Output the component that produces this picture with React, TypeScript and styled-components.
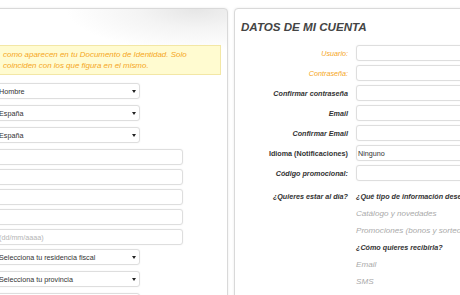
import React from 'react';
import styled, { createGlobalStyle } from 'styled-components';

const GlobalStyle = createGlobalStyle`
  html, body {
    margin: 0;
    padding: 0;
    background: #fff;
    overflow: hidden;
    font-family: "Liberation Sans", Arial, sans-serif;
  }
`;

const Page = styled.div`
  display: flex;
  align-items: flex-start;
  gap: 6px;
  padding-top: 8px;
  margin-left: -30px;
  width: 700px;
`;

const LeftPanel = styled.section`
  flex: none;
  box-sizing: border-box;
  width: 258px;
  min-height: 320px;
  padding: 36px 6px 0 10px;
  border: 1px solid #d9d9d9;
  border-radius: 0 4px 0 0;
  box-shadow: 0 0 3px rgba(0, 0, 0, 0.08);
  background:
    radial-gradient(ellipse 130px 42px at 88% 0, #e6e6e6 0%, #f4f4f4 45%, rgba(255, 255, 255, 0) 100%),
    #fff;
`;

const Notice = styled.div`
  box-sizing: border-box;
  height: 30px;
  padding: 3px 4px 0 21px;
  border: 1px solid #f3e7a5;
  background: #fffbd0;
  color: #f5a623;
  font-size: 7.95px;
  font-style: italic;
  line-height: 11px;
`;

const FieldColumn = styled.div`
  display: flex;
  flex-direction: column;
  align-items: flex-start;
  margin: 8px 0 0 9px;
`;

const Box = styled.div<{ $width: number }>`
  box-sizing: border-box;
  display: flex;
  align-items: center;
  justify-content: space-between;
  width: ${({ $width }) => $width}px;
  height: 16px;
  border: 1px solid #dedede;
  border-radius: 3px;
  box-shadow: 0 0 2px rgba(0, 0, 0, 0.06);
  background: #fff;
  color: #333;
  font-size: 7.2px;
  white-space: nowrap;
  overflow: hidden;
`;

const SelectBox = styled(Box)`
  padding: 0 3px 0 8px;
  margin-bottom: 6px;
`;

const InputBox = styled(Box)<{ $muted?: boolean }>`
  padding: 0 0 0 8px;
  margin-bottom: 4px;
  color: ${({ $muted }) => ($muted ? '#b5b5b5' : '#333')};
`;

const Caret = styled.span`
  width: 0;
  height: 0;
  border-left: 2.5px solid transparent;
  border-right: 2.5px solid transparent;
  border-top: 3px solid #222;
`;

const RightPanel = styled.section`
  flex: none;
  box-sizing: border-box;
  width: 320px;
  min-height: 320px;
  padding: 11px 0 0 6px;
  border: 1px solid #d9d9d9;
  border-radius: 4px 4px 0 0;
  box-shadow: 0 0 3px rgba(0, 0, 0, 0.08);
  background: #fff;
`;

const Title = styled.h2`
  margin: 0 0 11px;
  color: #444;
  font-size: 11.6px;
  font-weight: 900;
  font-style: italic;
  line-height: 14px;
`;

const FormGrid = styled.div`
  display: grid;
  grid-template-columns: 107px 160px;
  grid-auto-rows: 16px;
  column-gap: 8px;
  row-gap: 4px;
`;

const Label = styled.label<{ $tone?: 'required' | 'strong' | 'plain' }>`
  align-self: center;
  text-align: right;
  font-size: 7.2px;
  white-space: nowrap;
  color: ${({ $tone }) => ($tone === 'required' ? '#f5a623' : '#333')};
  font-weight: ${({ $tone }) => ($tone === 'required' ? 400 : 700)};
  font-style: ${({ $tone }) => ($tone === 'plain' ? 'normal' : 'italic')};
`;

const FieldBox = styled(Box)`
  padding: 0 0 0 1px;
`;

const Prefs = styled.div`
  display: grid;
  grid-template-columns: 107px 160px;
  grid-auto-rows: 17px;
  column-gap: 8px;
  margin-top: 7px;
`;

const PrefLine = styled.div<{ $heading?: boolean }>`
  grid-column: 2;
  align-self: center;
  white-space: nowrap;
  font-style: italic;
  font-size: ${({ $heading }) => ($heading ? '7.2px' : '8.1px')};
  font-weight: ${({ $heading }) => ($heading ? 700 : 400)};
  color: ${({ $heading }) => ($heading ? '#333' : '#aaa')};
`;

const PrefLabel = styled(Label)`
  grid-column: 1;
  grid-row: 1;
`;

const accountRows: { label: string; tone: 'required' | 'strong' | 'plain'; value?: string }[] = [
  { label: 'Usuario:', tone: 'required' },
  { label: 'Contraseña:', tone: 'required' },
  { label: 'Confirmar contraseña', tone: 'strong' },
  { label: 'Email', tone: 'strong' },
  { label: 'Confirmar Email', tone: 'strong' },
  { label: 'Idioma (Notificaciones)', tone: 'plain', value: 'Ninguno' },
  { label: 'Código promocional:', tone: 'strong' },
];

const App: React.FC = () => {
  return (
    <>
      <GlobalStyle />
      <Page>
        <LeftPanel>
          <Notice>
            como aparecen en tu Documento de Identidad. Solo
            <br />
            coinciden con los que figura en el mismo.
          </Notice>
          <FieldColumn>
            <SelectBox $width={150}>Hombre<Caret /></SelectBox>
            <SelectBox $width={150}>España<Caret /></SelectBox>
            <SelectBox $width={150}>España<Caret /></SelectBox>
            <InputBox $width={193} />
            <InputBox $width={193} />
            <InputBox $width={193} />
            <InputBox $width={193} />
            <InputBox $width={193} $muted>(dd/mm/aaaa)</InputBox>
            <SelectBox $width={150}>Selecciona tu residencia fiscal<Caret /></SelectBox>
            <SelectBox $width={150}>Selecciona tu provincia<Caret /></SelectBox>
            <SelectBox $width={150}><span /><Caret /></SelectBox>
          </FieldColumn>
        </LeftPanel>

        <RightPanel>
          <Title>DATOS DE MI CUENTA</Title>
          <FormGrid>
            {accountRows.map((row) => (
              <React.Fragment key={row.label}>
                <Label $tone={row.tone}>{row.label}</Label>
                <FieldBox $width={160}>{row.value}</FieldBox>
              </React.Fragment>
            ))}
          </FormGrid>
          <Prefs>
            <PrefLabel $tone="strong">¿Quieres estar al día?</PrefLabel>
            <PrefLine $heading>¿Qué tipo de información deseas recibir?</PrefLine>
            <PrefLine>Catálogo y novedades</PrefLine>
            <PrefLine>Promociones (bonos y sorteos)</PrefLine>
            <PrefLine $heading>¿Cómo quieres recibirla?</PrefLine>
            <PrefLine>Email</PrefLine>
            <PrefLine>SMS</PrefLine>
          </Prefs>
        </RightPanel>
      </Page>
    </>
  );
};

export default App;
